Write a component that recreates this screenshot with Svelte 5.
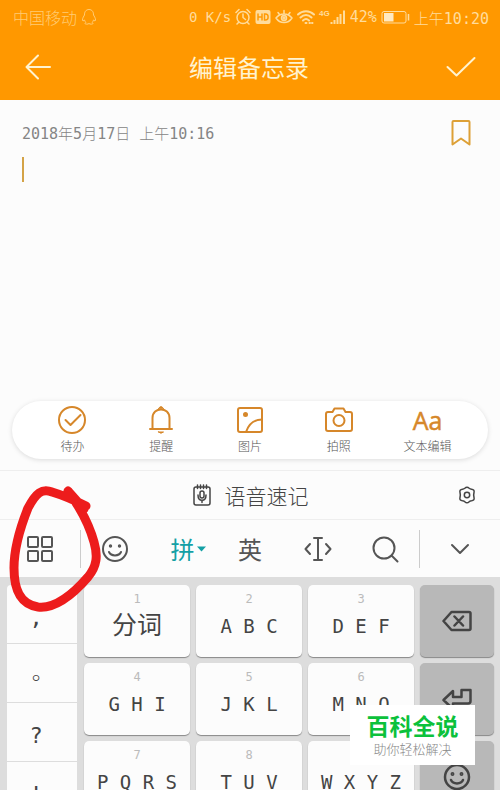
<script>
  const tools = [
    { id: 'todo', label: '待办' },
    { id: 'remind', label: '提醒' },
    { id: 'image', label: '图片' },
    { id: 'camera', label: '拍照' },
    { id: 'text', label: '文本编辑' }
  ];
  const marks = [',', '。', '?', '!'];
  const rows = [
    { keys: [['1', '分词'], ['2', 'A B C'], ['3', 'D E F']], action: 'delete', label: '删除' },
    { keys: [['4', 'G H I'], ['5', 'J K L'], ['6', 'M N O']], action: 'enter', label: '换行' },
    { keys: [['7', 'P Q R S'], ['8', 'T U V'], ['9', 'W X Y Z']], action: 'smile', label: '表情' }
  ];
  let memo = $state('');
</script>

{#snippet face()}
  <svg width="28" height="28" viewBox="0 0 28 28" class="line">
    <circle cx="14" cy="14" r="12" />
    <path d="M8 17C10 21.500 18 21.500 20 17" />
    <circle cx="9.500" cy="11" r="0.700" class="dot" /><circle cx="18.500" cy="11" r="0.700" class="dot" />
  </svg>
{/snippet}

<div class="phone">
  <header>
    <div class="status">
      <span class="carrier">中国移动</span>
      <svg class="line qq" width="16" height="18" viewBox="0 0 16 18"><path d="M8 1.500C4.500 1.500 3.500 4 3.500 7C1.500 10 1 12 2 13L3.500 12C4 13.500 4.500 14 5 14.500C3 15.500 4 16.500 7 16L8 15.500L9 16C12 16.500 13 15.500 11 14.500C11.500 14 12 13.500 12.500 12L14 13C15 12 14.500 10 12.500 7C12.500 4 11.500 1.500 8 1.500Z" /></svg>
      <span class="speed">0 K/s</span>
      <svg class="line" width="16" height="18" viewBox="0 0 16 18"><circle cx="8" cy="9.500" r="6" /><path d="M8 6V9.500L10.500 11.500M1 4.500L4 1.500M15 4.500L12 1.500M3.500 14.500L2 16M12.500 14.500L14 16" /></svg>
      <svg width="16" height="16" viewBox="0 0 16 16"><rect x="0.500" y="1" width="15" height="14" rx="2" fill="#ffdc9c" /><path d="M3 4.500V11.500M7 4.500V11.500M3 8H7M9.500 5V11H10.500C14 11 14 5 10.500 5Z" fill="none" stroke="#ff9a05" stroke-width="1.500" /></svg>
      <svg class="line" width="18" height="18" viewBox="0 0 18 18"><path d="M1 10C5 4.500 13 4.500 17 10C13 16 5 16 1 10ZM3 4.500L4.500 6.500M9 2.500V5.500M15 4.500L13.500 6.500" /><circle cx="9" cy="10" r="2.500" /><circle cx="9" cy="10" r="1" /></svg>
      <svg class="line wifi" width="18" height="18" viewBox="0 0 18 18"><path d="M1 6.500C5.500 2 12.500 2 17 6.500M3.500 9.500C7 6 11 6 14.500 9.500M6 12.500C8 10.500 10 10.500 12 12.500M8.500 15H9.500M12.500 15H13M15 15H15.500" /></svg>
      <span class="signal"><small>4G</small><svg width="16" height="16" viewBox="0 0 16 16"><path d="M1.500 13V15M4.500 11V15M7.500 8V15M10.500 5V15M14 1.500V15" fill="none" stroke="#ffdc9c" stroke-width="2" /></svg></span>
      <span class="battery-text">42%</span>
      <svg width="29" height="16" viewBox="0 0 29 16"><rect x="1" y="2.500" width="24" height="11.500" rx="2" fill="none" stroke="#ffdc9c" /><rect x="3" y="4" width="9.500" height="8.500" fill="#ffe9c2" /><path d="M27.500 5V11.500" stroke="#ffdc9c" stroke-width="1.500" /></svg>
      <time>上午10:20</time>
    </div>
    <div class="titlebar">
      <button aria-label="返回"><svg width="28" height="28" viewBox="0 0 28 28" class="line"><path d="M26 14H3M14 2.500L2.500 14L14 25.500" /></svg></button>
      <h1>编辑备忘录</h1>
      <button aria-label="完成"><svg width="30" height="28" viewBox="0 0 30 28" class="line"><path d="M1.500 14L10.500 22.500L28.500 5" /></svg></button>
    </div>
  </header>

  <main>
    <div class="meta">
      <time>2018年5月17日 上午10:16</time>
      <button aria-label="收藏"><svg width="24" height="28" viewBox="0 0 24 28" class="line"><path d="M3.500 3Q3.500 2 4.500 2H19.500Q20.500 2 20.500 3V25.500L12 19.500L3.500 25.500Z" /></svg></button>
    </div>
    <div class="editor"><i></i><textarea aria-label="备忘录内容" bind:value={memo}></textarea></div>
    <nav>
      {#each tools as tool}
        <button>
          {#if tool.id === 'text'}
            <b>Aa</b>
          {:else}
            <svg width="30" height="30" viewBox="0 0 30 30" class="line">
              {#if tool.id === 'todo'}
                <circle cx="15" cy="15" r="13" /><path d="M8.500 15L13.500 20L23.500 10" />
              {:else if tool.id === 'remind'}
                <path d="M4 24H26M6.500 23.500V13C6.500 1.500 23.500 1.500 23.500 13V23.500" /><path class="solid thin" d="M12.500 3.500Q15 -0.500 17.500 3.500ZM12.500 27H17.500Q15 29.500 12.500 27Z" />
              {:else if tool.id === 'image'}
                <rect x="3" y="3" width="24" height="24" rx="2" /><circle cx="10.500" cy="9.500" r="1.500" class="solid" /><path d="M11 27C14 18 19 14.500 27 14.500" />
              {:else}
                <path d="M4 7H8.500L10.500 3.500H19.500L21.500 7H26Q28 7 28 9V24Q28 26 26 26H4Q2 26 2 24V9Q2 7 4 7Z" /><circle cx="15" cy="15.500" r="5.500" />
              {/if}
            </svg>
          {/if}
          <span>{tool.label}</span>
        </button>
      {/each}
    </nav>
  </main>

  <section class="voice">
    <button class="record">
      <svg width="20" height="24" viewBox="0 0 20 24" class="line"><rect x="2" y="4" width="16" height="18" rx="2" /><path d="M5.500 2V5.500M8.500 2V5.500M11.500 2V5.500M14.500 2V5.500M6 12C6 19 14 19 14 12M10 17.500V19.500" /><rect x="8" y="8" width="4" height="7" rx="2" /></svg>
      <span>语音速记</span>
    </button>
    <button class="gear" aria-label="设置"><svg width="18" height="18" viewBox="0 0 18 18" class="line"><path d="M6.800 2.300Q9 0 11.200 2.300Q12.200 3.200 13.500 3.200Q16.800 3.500 16 6.500Q15.300 9 16 11.500Q16.800 14.500 13.500 14.800Q12.200 14.800 11.200 15.700Q9 18 6.800 15.700Q5.800 14.800 4.500 14.800Q1.200 14.500 2 11.500Q2.700 9 2 6.500Q1.200 3.500 4.500 3.200Q5.800 3.200 6.800 2.300Z" /><circle cx="9" cy="9" r="2.700" /></svg></button>
  </section>

  <section class="modes">
    <button class="edge" aria-label="功能"><svg width="28" height="28" viewBox="0 0 28 28" class="line"><rect x="2" y="2" width="10" height="10" rx="1" /><rect x="16" y="2" width="10" height="10" rx="1" /><rect x="2" y="16" width="10" height="10" rx="1" /><rect x="16" y="16" width="10" height="10" rx="1" /></svg></button>
    <div class="middle">
      <button aria-label="表情">{@render face()}</button>
      <button class="pinyin">拼<svg width="9" height="6" viewBox="0 0 9 6"><path d="M0 0.500H9L4.500 5.500Z" fill="#14a0a5" /></svg></button>
      <button>英</button>
      <button aria-label="光标"><svg width="28" height="28" viewBox="0 0 28 28" class="line"><path d="M10 3H18M14 3V25M10 25H18M6 9L1.500 14L6 19M22 9L26.500 14L22 19" /></svg></button>
      <button aria-label="搜索"><svg width="28" height="28" viewBox="0 0 28 28" class="line"><circle cx="13" cy="13" r="10.500" /><path d="M20.500 20.500L26.500 26.500" /></svg></button>
    </div>
    <button class="edge" aria-label="收起"><svg width="20" height="14" viewBox="0 0 20 14" class="line"><path d="M2 3L10 11L18 3" /></svg></button>
  </section>

  <section class="keyboard">
    <div class="marks">{#each marks as mark}<button>{mark}</button>{/each}</div>
    <div class="keys">
      {#each rows as row}
        {#each row.keys as [digit, letters]}
          <button class="key" class:word={digit === '1'}><small>{digit}</small><span>{letters}</span></button>
        {/each}
        <button class="key action" aria-label={row.label}>
          {#if row.action === 'smile'}
            {@render face()}
          {:else if row.action === 'delete'}
            <svg width="30" height="24" viewBox="0 0 30 24" class="line"><path d="M1.500 12L9.500 3H27Q28.500 3 28.500 4.500V19.500Q28.500 21 27 21H9.500ZM12.500 7.500L21 16.500M21 7.500L12.500 16.500" /></svg>
          {:else}
            <svg width="30" height="24" viewBox="0 0 30 24" class="line"><path d="M1.500 13L11 4V10H19.500V3H28.500V14Q28.500 16.500 26 16.500H11V22Z" /></svg>
          {/if}
        </button>
      {/each}
    </div>
  </section>

  <svg class="ring" width="110" height="140" viewBox="0 480 110 140"><path d="M86 506C74 500 62 495 52 492C42 488 36 493 28 508C20 528 14 550 14 568C14 588 19 604 38 607C56 609 75 592 88 577C97 566 98 556 94 542C89 524 82 510 68 491L84 509" /></svg>
  <aside><strong>百科全说</strong><span>助你轻松解决</span></aside>
</div>

<style>
  :global(body) { margin: 0; }
  .phone {
    position: relative;
    height: 100vh;
    overflow: hidden;
    background: #fcfcfc;
    color: #444;
    font-family: "DejaVu Sans Mono", "Noto Sans CJK SC", monospace;
    font-weight: 300;
  }
  button { margin: 0; padding: 0; border: 0; background: none; color: inherit; font: inherit; display: flex; align-items: center; justify-content: center; }
  svg { display: block; flex: none; }
  .line { fill: none; stroke: currentColor; stroke-width: 2; stroke-linecap: round; stroke-linejoin: round; }
  .dot, .solid { fill: currentColor; }
  .thin { stroke-width: 1; }
  header { height: 100px; background: #ff9800; color: #fff3d0; }
  .status { display: flex; align-items: center; height: 34px; padding: 0 11px 0 13px; gap: 4px; color: #ffdc9c; font-size: 15px; white-space: nowrap; }
  .status .line { stroke-width: 1.5; }
  .status .wifi { stroke-width: 2; }
  .carrier { font-size: 16px; color: #ffcc75; }
  .status .qq { stroke: #ffcc75; stroke-width: 1; }
  .speed { margin-left: auto; font-size: 14px; }
  .signal { display: flex; }
  .signal small { font: 700 8px/10px "Liberation Sans", sans-serif; }
  .titlebar { display: flex; align-items: center; justify-content: space-between; height: 66px; padding: 0 24px; }
  .titlebar button { height: 66px; }
  h1 { margin: 0; padding-top: 4px; font-size: 24px; font-weight: 400; line-height: 62px; }
  main { display: flex; flex-direction: column; height: 371px; box-sizing: border-box; padding-bottom: 11px; border-bottom: 1px solid #eee; }
  .meta { display: flex; align-items: center; justify-content: space-between; padding: 14px 27px 0 22px; color: #858585; font-size: 15px; line-height: 36px; }
  .meta time { padding-top: 2px; }
  .meta button { color: #dda036; }
  .editor { flex: 1; display: flex; padding: 5px 22px; }
  .editor i { width: 2px; height: 25px; background: #d4a347; }
  textarea { flex: 1; min-width: 0; padding: 0; border: 0; outline: 0; resize: none; background: none; color: #444; font: 16px/24px "DejaVu Sans Mono", "Noto Sans CJK SC", monospace; }
  nav { display: flex; height: 58px; margin: 0 12px; padding: 0 16px; box-sizing: border-box; border-radius: 29px; background: #fff; box-shadow: 0 1px 5px #0002; }
  nav button { flex: 1; flex-direction: column; justify-content: flex-start; padding-top: 4px; color: #d6872a; }
  nav b { font: 400 25px/30px "Open Sans", sans-serif; -webkit-text-stroke: 0.5px currentColor; }
  nav span { color: #555; font-size: 12px; line-height: 24px; }
  .voice { display: grid; grid-template-columns: 1fr auto 1fr; align-items: center; height: 49px; box-sizing: border-box; padding: 0 24px; border-bottom: 1px solid #eee; }
  .voice .line { stroke-width: 1.5; }
  .record { grid-column: 2; gap: 13px; font-size: 21px; }
  .gear { justify-self: end; }
  .modes { display: flex; align-items: center; height: 57px; color: #555; font: 24px/36px "Noto Sans CJK SC", sans-serif; }
  .edge { width: 80px; height: 38px; }
  .middle { flex: 1; display: flex; height: 38px; border: solid #ccc; border-width: 0 1px; }
  .middle button { flex: 1; }
  .pinyin { color: #14a0a5; }
  .pinyin svg { margin: 0 -12px 0 3px; }
  .keyboard { display: flex; gap: 7px; padding: 8px 6px 8px 7px; background: #ddd; }
  .marks { width: 70px; height: 228px; overflow: hidden; border-radius: 4px; background: #fcfcfc; font-family: "DejaVu Sans Mono", "Noto Sans CJK TC", monospace; }
  .marks button { width: 100%; height: 59px; box-sizing: border-box; padding: 6px 12px 0 0; border-bottom: 1px solid #ddd; font-size: 22px; }
  .keys { flex: 1; display: grid; grid-template-columns: repeat(3, 106fr) 74fr; grid-auto-rows: 72px; gap: 6px; }
  .key { flex-direction: column; justify-content: flex-start; border-radius: 5px; background: #fcfcfc; box-shadow: 0 1px 1px #888; font-size: 19px; white-space: pre; }
  .key small { color: #bbb; font-size: 12px; line-height: 28px; }
  .key span { line-height: 26px; }
  .key.word span { font-size: 25px; font-weight: 400; }
  .action { justify-content: center; background: #b8b8b8; }
  .action .line { stroke-width: 2.5; }
  .ring { position: absolute; left: 0; top: 480px; pointer-events: none; fill: none; stroke: #ed1c1c; stroke-width: 9; stroke-linecap: round; stroke-linejoin: round; }
  aside { position: absolute; right: 25px; bottom: 25px; width: 125px; height: 60px; display: flex; flex-direction: column; align-items: center; justify-content: center; background: #fff; font-family: "Noto Sans CJK SC", sans-serif; }
  aside strong { color: #0bc13b; font-size: 23px; font-weight: 700; line-height: 27px; }
  aside span { color: #888; font-size: 13px; line-height: 20px; }
</style>
